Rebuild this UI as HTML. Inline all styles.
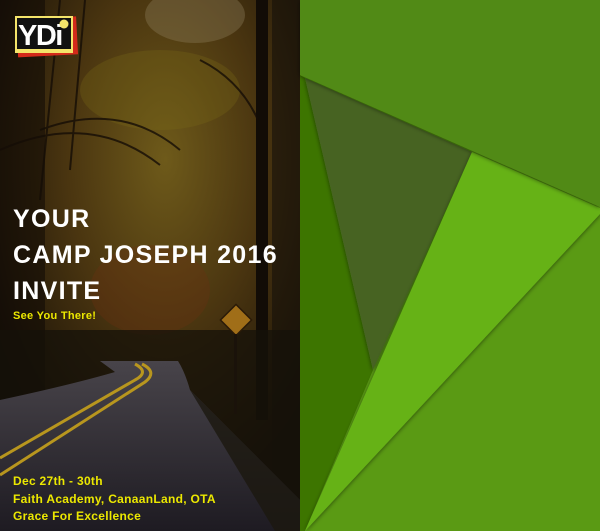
<!DOCTYPE html>
<html><head><meta charset="utf-8"><style>
html,body{margin:0;padding:0;width:600px;height:531px;overflow:hidden;background:#000}
.t{position:absolute;left:13px;font-family:"Liberation Sans",sans-serif;font-weight:bold;white-space:nowrap}
</style></head><body>
<svg width="600" height="531" style="position:absolute;left:0;top:0">
<defs>
<radialGradient id="fol" cx="0.55" cy="0.3" r="0.65">
<stop offset="0" stop-color="#6e5a1a"/><stop offset="0.5" stop-color="#4a3510"/><stop offset="1" stop-color="#1a1208"/>
</radialGradient>
<linearGradient id="road" x1="0" y1="0" x2="0" y2="1">
<stop offset="0" stop-color="#48444a"/><stop offset="1" stop-color="#1e1b22"/>
</linearGradient>
<filter id="sh" x="-10%" y="-10%" width="120%" height="120%"><feDropShadow dx="0" dy="1" stdDeviation="2" flood-color="#000" flood-opacity="0.5"/></filter>
</defs>
<rect width="300" height="531" fill="url(#fol)"/>
<ellipse cx="195" cy="15" rx="50" ry="28" fill="#8a7a58" opacity="0.4"/>
<ellipse cx="160" cy="90" rx="80" ry="40" fill="#7a6a18" opacity="0.3"/>
<ellipse cx="150" cy="290" rx="60" ry="45" fill="#6a3210" opacity="0.35"/>
<rect x="0" y="0" width="45" height="531" fill="#0e0a05" opacity="0.55"/>
<rect x="256" y="0" width="12" height="420" fill="#120c06"/>
<rect x="272" y="0" width="28" height="531" fill="#15100a" opacity="0.6"/>
<g stroke="#150d06" stroke-width="2" fill="none" opacity="0.8">
<path d="M40 130 Q120 100 180 150"/><path d="M0 150 Q90 110 160 165"/><path d="M200 60 Q240 80 258 120"/><path d="M60 0 L40 200"/><path d="M85 0 L70 170"/>
</g>
<rect x="0" y="330" width="300" height="201" fill="#15110a" opacity="0.75"/>
<path d="M100 361 L178 361 Q185 372 190 390 L300 500 L300 531 L0 531 L0 400 Q70 385 115 372 Z" fill="url(#road)"/>
<path d="M190 390 L300 500 L300 531 L275 531 Z" fill="#1c180f" opacity="0.8"/>
<path d="M135 364 Q150 372 135 380 L0 458" stroke="#b8961e" stroke-width="3" fill="none"/>
<path d="M142 364 Q158 372 145 382 L0 475" stroke="#b8961e" stroke-width="3" fill="none"/>
<g transform="translate(236,320) rotate(45)"><rect x="-11" y="-11" width="22" height="22" fill="#a06e18" stroke="#2a1a08" stroke-width="1.5"/></g>
<rect x="234" y="334" width="3" height="80" fill="#1a120a"/>
<!-- logo -->
<g transform="rotate(-3 45 35)"><rect x="17" y="18" width="60" height="38" fill="#d32a1a"/></g>
<rect x="15" y="16" width="58" height="37" fill="#f4e46a"/>
<rect x="17" y="18" width="54" height="31" fill="#111"/>
<text x="18" y="45" font-family="Liberation Sans,sans-serif" font-weight="bold" font-size="29" fill="#fff" letter-spacing="-1.5">YDi</text>
<circle cx="64" cy="24" r="4.5" fill="#f4e46a"/>
<!-- right panel -->
<g transform="translate(300,0)">
<rect width="300" height="531" fill="#5a9a14"/>
<polygon points="0,75 5,78 73,370 5,531 0,531" fill="#3d7500"/>
<polygon points="5,78 172,152 73,370" fill="#466424" filter="url(#sh)"/>
<polygon points="172,152 300,208 300,214 5,531" fill="#66b219" filter="url(#sh)"/>
<polygon points="0,0 300,0 300,207 0,75" fill="#518a13" filter="url(#sh)"/>
</g>
</svg>
<div class="t" style="top:201px;font-size:25px;color:#fff;line-height:36px;letter-spacing:1.3px">YOUR<br>CAMP JOSEPH 2016<br>INVITE</div>
<div class="t" style="top:310px;font-size:11px;color:#ece800;letter-spacing:0.3px">See You There!</div>
<div class="t" style="top:473px;font-size:12px;color:#ece800;line-height:17.5px;letter-spacing:0.3px">Dec 27th - 30th<br>Faith Academy, CanaanLand, OTA<br>Grace For Excellence</div>
</body></html>
